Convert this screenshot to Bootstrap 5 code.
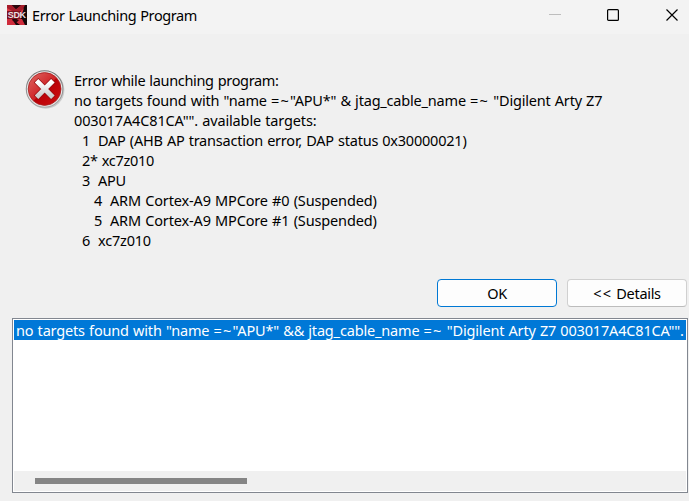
<!DOCTYPE html>
<html lang="en">
<head>
<meta charset="utf-8">
<meta name="viewport" content="width=device-width, initial-scale=1">
<title>Error Launching Program</title>
<link href="https://cdn.jsdelivr.net/npm/bootstrap@5.3.0/dist/css/bootstrap.min.css" rel="stylesheet">
<style>
body{font-family:"Segoe UI","Noto Sans","Open Sans",sans-serif;font-size:14.5px;line-height:20px;color:#000;background:#f0f0f0;letter-spacing:-.3px;word-spacing:.6px}
.dialog{width:689px;height:501px;background:#f0f0f0}
.titlebar{height:34px;background:#f3f3f3;padding:0 10px 2px 7px}
.titlebar h1{font-size:14.5px;line-height:20px;margin:-2px 0 0 5px;font-weight:400}
.controls{gap:45px}
.controls svg,.app-icon,.error-icon{display:block}
.app-icon{margin-top:-2px}
.message{height:245px;padding:36px 0 0 24px}
.message-text{margin:0 0 0 9px}
.line{white-space:pre;height:20px}
.num{display:inline-block;width:16px}
.target{padding-left:8px}
.core{padding-left:20px}
.t0{letter-spacing:-.39px}
.t1{letter-spacing:-.33px}
.t2{letter-spacing:-.19px}
.t3{letter-spacing:-.14px}
.t4{letter-spacing:-.22px}
.t7{letter-spacing:-.15px}
.t8{letter-spacing:-.2px}
.t10{letter-spacing:-.17px}
.op{letter-spacing:1.2px}
.actions{height:28px;padding-right:2px;gap:10px}
.actions .btn{width:120px;height:28px;padding:0;font-size:14.5px;line-height:26px;border-radius:4px;background:#fdfdfd;color:#000;border:1px solid #d0d0d0;border-bottom-color:#bcbcbc;letter-spacing:inherit;word-spacing:inherit}
.actions .btn-default{border-color:#0078d4}
.detail-list{margin:11px 1px 0 12px;height:175px;border:1px solid #828790;background:#fff;padding:1px}
.selected{background:#0078d7;color:#fff;height:20px;padding-left:2px;white-space:pre}
.scroll-track{height:20px;background:#f0f0f0;padding-left:21px}
.scroll-thumb{width:212px;height:6px;background:#858585}
</style>
</head>
<body>
<div class="dialog d-flex flex-column overflow-hidden">
  <header class="titlebar d-flex align-items-center">
    <svg class="app-icon overflow-visible" width="20" height="20" viewBox="0 0 20 20" aria-hidden="true">
      <path fill="#14080a" d="M0 0h20v20H0z"/>
      <path fill="#a51c2a" d="M0 0h5l4 4 5-4h4l-3 6H0z"/>
      <path fill="#dd3a46" d="M0 3l5 3h9l3-3-2 6H0z"/>
      <path fill="#7d121e" d="M0 6h14v8H0z"/>
      <path fill="#cf2c3c" d="M0 14h5l4 6H0zM10 14h5l3 6h-5l-4-3z"/>
      <path fill="#2a060c" d="M5 0h8L9 4zM5 15l4-1 3 1-3 3z"/>
      <text x=".8" y="13.2" textLength="18.2" lengthAdjust="spacing" font-family="Liberation Sans, sans-serif" font-size="9" font-weight="700" fill="#e9dfe1" style="letter-spacing:0">SDK</text>
    </svg>
    <h1 class="flex-grow-1"><span class="t0">Error Launching Program</span></h1>
    <div class="controls d-flex align-items-center">
      <svg width="14" height="14"><path d="M2 5.5h12" stroke="#bdbdbd"/></svg>
      <svg width="14" height="14"><rect x="1.6" y=".6" width="10.8" height="10.8" rx="1" fill="none" stroke="#000" stroke-width="1.2"/></svg>
      <svg width="14" height="14"><path d="M1.5.5l11 11M12.5.5l-11 11" stroke="#000" stroke-width="1.2"/></svg>
    </div>
  </header>
  <main>
    <section class="message d-flex align-items-start">
      <svg class="error-icon" width="41" height="41" viewBox="0 0 41 41" aria-label="Error">
        <defs>
          <linearGradient id="red" x1="0" y1="0" x2="1" y2="1"><stop offset="0" stop-color="#e06a66"/><stop offset=".5" stop-color="#cf2426"/><stop offset=".52" stop-color="#b90006"/><stop offset="1" stop-color="#cf1012"/></linearGradient>
          <linearGradient id="rim" x1="0" y1="0" x2="0" y2="1"><stop offset="0" stop-color="#777"/><stop offset="1" stop-color="#aaa"/></linearGradient>
          <linearGradient id="cross" x1="0" y1="0" x2="0" y2="1"><stop offset="0" stop-color="#fff"/><stop offset="1" stop-color="#cfcfcf"/></linearGradient>
        </defs>
        <circle cx="21.7" cy="20" r="18.7" fill="#ccc"/>
        <circle cx="20.6" cy="19" r="18.3" fill="#e6e6e6" stroke="url(#rim)" stroke-width="1.1"/>
        <circle cx="20.6" cy="19" r="16.4" fill="url(#red)" stroke="#a82021" stroke-width=".8"/>
        <path d="M14.3 12.6l12.8 12.8M27.1 12.6L14.3 25.4" stroke="#971013" stroke-width="6.4" stroke-linecap="square"/>
        <path d="M14.3 12.6l12.8 12.8M27.1 12.6L14.3 25.4" stroke="url(#cross)" stroke-width="5" stroke-linecap="square"/>
      </svg>
      <div class="message-text">
        <div class="line"><span class="t1">Error while launching program:</span></div>
        <div class="line"><span class="t2">no targets found with "name <span class="op">=~</span>"APU*" &amp; jtag_cable_name <span class="op">=~</span> "Digilent Arty Z7</span></div>
        <div class="line"><span class="t3">003017A4C81CA"". available targets:</span></div>
        <div class="line target"><span class="num">1</span><span class="t4">DAP (AHB AP transaction error, DAP status 0x30000021)</span></div>
        <div class="line target"><span class="t5">2* xc7z010</span></div>
        <div class="line target"><span class="num">3</span><span class="t6">APU</span></div>
        <div class="line core"><span class="num">4</span><span class="t7">ARM Cortex-A9 MPCore #0 (Suspended)</span></div>
        <div class="line core"><span class="num">5</span><span class="t7">ARM Cortex-A9 MPCore #1 (Suspended)</span></div>
        <div class="line target"><span class="num">6</span><span class="t8">xc7z010</span></div>
      </div>
    </section>
    <div class="actions d-flex justify-content-end">
      <button type="button" class="btn btn-default">OK</button>
      <button type="button" class="btn"><span class="t9"><span class="op">&lt;&lt;</span> Details</span></button>
    </div>
    <section class="detail-list d-flex flex-column">
      <div class="selected overflow-hidden"><span class="t10">no targets found with "name <span class="op">=~</span>"APU*" &amp;&amp; jtag_cable_name <span class="op">=~</span> "Digilent Arty Z7 003017A4C81CA"".</span></div>
      <div class="scroll-track d-flex align-items-center mt-auto"><div class="scroll-thumb"></div></div>
    </section>
  </main>
</div>
<script src="https://cdn.jsdelivr.net/npm/bootstrap@5.3.0/dist/js/bootstrap.bundle.min.js"></script>
</body>
</html>
